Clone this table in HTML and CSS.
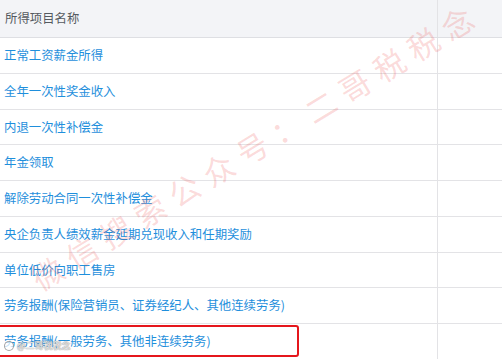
FILE: index.html
```html
<!DOCTYPE html>
<html lang="zh">
<head>
<meta charset="utf-8">
<link rel="stylesheet" href="styles.css">
</head>
<body>
<div class="page">
  <div class="table">
    <div class="row head"><div class="cell main">所得项目名称</div><div class="cell"></div></div>
    <div class="row"><div class="cell main"><a>正常工资薪金所得</a></div><div class="cell"></div></div>
    <div class="row"><div class="cell main"><a>全年一次性奖金收入</a></div><div class="cell"></div></div>
    <div class="row"><div class="cell main"><a>内退一次性补偿金</a></div><div class="cell"></div></div>
    <div class="row"><div class="cell main"><a>年金领取</a></div><div class="cell"></div></div>
    <div class="row"><div class="cell main"><a>解除劳动合同一次性补偿金</a></div><div class="cell"></div></div>
    <div class="row"><div class="cell main"><a>央企负责人绩效薪金延期兑现收入和任期奖励</a></div><div class="cell"></div></div>
    <div class="row"><div class="cell main"><a>单位低价向职工售房</a></div><div class="cell"></div></div>
    <div class="row"><div class="cell main"><a>劳务报酬(保险营销员、证券经纪人、其他连续劳务)</a></div><div class="cell"></div></div>
    <div class="row"><div class="cell main"><a>劳务报酬(一般劳务、其他非连续劳务)</a></div><div class="cell"></div></div>
  </div>
  <div class="highlight"></div>
  <div class="watermark">微信搜索公众号：二哥税税念</div>
  <div class="credit"><span class="credit-icon"></span>@二哥税税念</div>
</div>
</body>
</html>
```
FILE: styles.css
```css
html, body {
  margin: 0;
  padding: 0;
  background: #fff;
}
body {
  width: 502px;
  height: 359px;
  overflow: hidden;
  font-family: "Noto Sans CJK SC", "Noto Sans", sans-serif;
}
.page {
  position: relative;
  width: 502px;
  height: 359px;
  overflow: hidden;
}
.table {
  display: flex;
  flex-direction: column;
}
.row {
  display: grid;
  grid-template-columns: 438px 1fr;
  height: 34.75px;
  border-bottom: 1px solid #e3e3e6;
}
.row.head {
  height: 37px;
  background: #f3f4f7;
  border-bottom-color: #dedfe3;
}
.cell {
  display: flex;
  align-items: center;
  padding-left: 4px;
  font-size: 12.4px;
  line-height: 1;
}
.cell.main {
  border-right: 1px solid #e3e3e6;
}
.head .cell {
  color: #555a60;
  padding-left: 5px;
}
.cell a {
  color: #1f8fdc;
  text-decoration: none;
}
.highlight {
  position: absolute;
  left: -3px;
  top: 325px;
  width: 298px;
  height: 28px;
  border: 2.5px solid #e5161c;
  border-radius: 3px;
}
.watermark {
  position: absolute;
  left: 34px;
  top: 266px;
  height: 30px;
  line-height: 30px;
  font-size: 31px;
  letter-spacing: 9px;
  white-space: nowrap;
  font-weight: 400;
  color: rgba(236, 70, 70, 0.2);
  transform-origin: 0 50%;
  transform: rotate(-31.4deg);
  pointer-events: none;
}
.credit {
  position: absolute;
  left: 4px;
  top: 340px;
  display: flex;
  align-items: center;
  gap: 3px;
  font-size: 9px;
  line-height: 12px;
  color: rgba(255, 255, 255, 0.85);
  text-shadow: 0 0 1px #888, 0 0 1px #888;
}
.credit-icon {
  width: 8px;
  height: 8px;
  border-radius: 50%;
  border: 1px solid rgba(140, 140, 140, 0.8);
  background: rgba(255, 255, 255, 0.7);
}
```
